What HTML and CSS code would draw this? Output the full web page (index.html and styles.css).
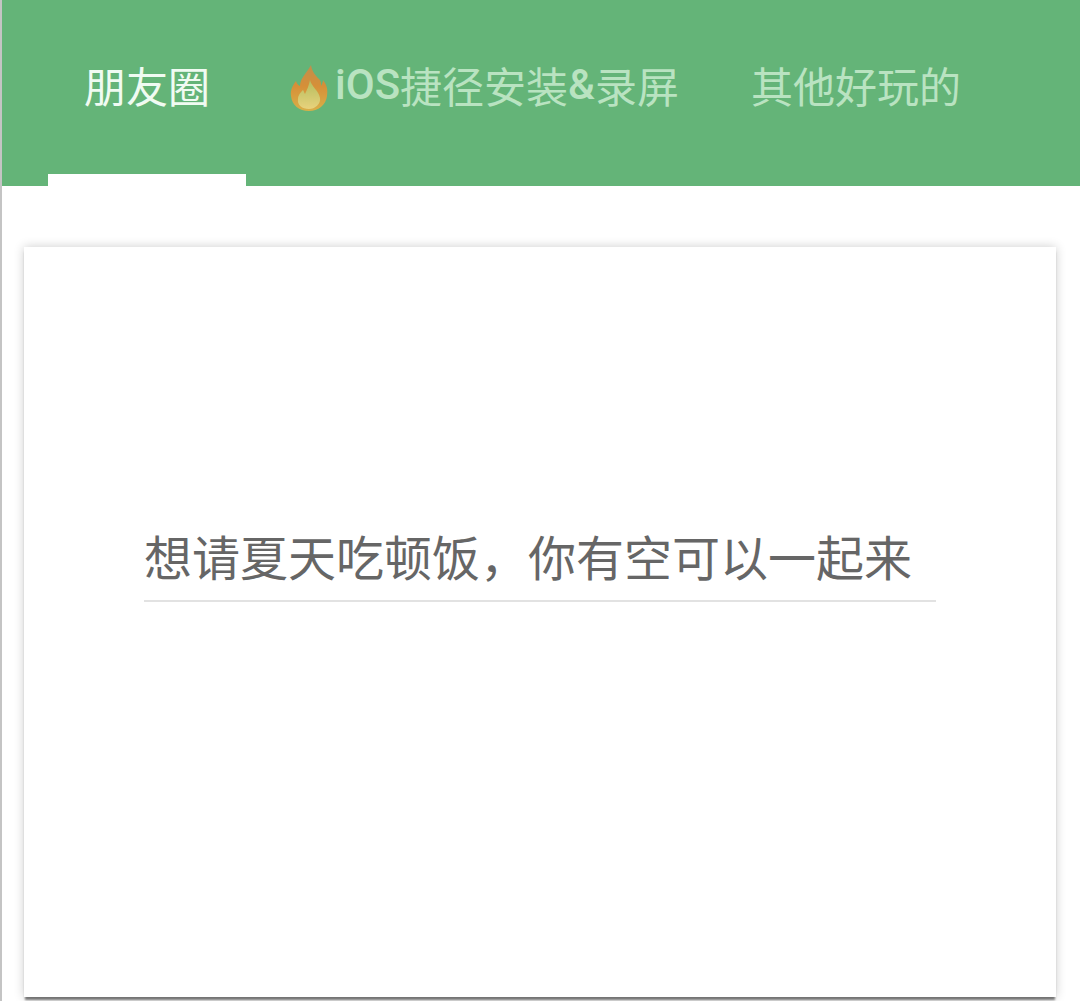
FILE: index.html
```html
<!DOCTYPE html>
<html lang="zh-CN">
<head>
    <meta charset="UTF-8">
    <meta name="viewport" content="width=device-width, initial-scale=1.0">
    <title>朋友圈</title>
    <link rel="stylesheet" href="styles.css">
</head>
<body>
    <div class="tabs">
        <div class="tab active">朋友圈</div>
        <div class="tab">
            <svg class="flame" viewBox="0 0 38 46">
                <defs>
                    <linearGradient id="outer" x1="0" y1="0" x2="0" y2="1">
                        <stop offset="0" stop-color="#c08f4c"/>
                        <stop offset="0.45" stop-color="#d68f38"/>
                        <stop offset="1" stop-color="#d8b048"/>
                    </linearGradient>
                    <linearGradient id="inner" x1="0" y1="0" x2="0" y2="1">
                        <stop offset="0" stop-color="#b3bd5e"/>
                        <stop offset="1" stop-color="#e8d27c"/>
                    </linearGradient>
                </defs>
                <path d="M21 0C22 7 26 11 30 15C31 17 31 19 31 21C32 19 33 17 33 15C37 20 38 25 37 31C36 40 28 46 19 46C9 46 2 40 1 31C0 25 3 20 6 16C7 19 8 20 10 21C10 13 17 8 21 0Z" fill="url(#outer)"/>
                <path d="M20 15C21 21 29 26 30 33C31 39 25 44 19 44C12 44 7 40 8 34C8 30 11 27 13 25C14 26 14 28 15 29C17 25 19 20 20 15Z" fill="url(#inner)"/>
            </svg><span class="latin">iOS</span>捷径安装<span class="latin">&amp;</span>录屏
        </div>
        <div class="tab">其他好玩的</div>
    </div>

    <div class="card">
        <div class="line">想请夏天吃顿饭，你有空可以一起来</div>
    </div>
</body>
</html>
```

FILE: styles.css
```css
* {
    box-sizing: border-box;
}
body {
    margin: 0;
    height: 1001px;
    overflow: hidden;
    background: #fff;
    border-left: 2px solid #c4c4c4;
    font-family: Roboto, "Noto Sans CJK SC", sans-serif;
}
.tabs {
    display: flex;
    height: 186px;
    margin-left: -2px;
    padding-left: 46px;
    background: #64b478;
    border-left: 2px solid #4f9c64;
}
.tab {
    display: flex;
    align-items: center;
    height: 186px;
    padding: 0 36px 6px;
    border-bottom: 12px solid transparent;
    font-size: 42px;
    color: #b9e3c1;
    white-space: nowrap;
}
.tab.active {
    color: #f0fbf2;
    border-bottom-color: #fff;
}
.latin {
    font-weight: 500;
}
.flame {
    width: 38px;
    height: 46px;
    margin: 8px 7px 0 8px;
    flex-shrink: 0;
    filter: blur(0.7px);
}
.card {
    height: 750px;
    margin: 61px 24px 0 22px;
    padding: 272px 120px 0;
    background: #fff;
    box-shadow: 0 4px 2px -1px rgba(0, 0, 0, 0.5), 0 0 10px rgba(0, 0, 0, 0.2);
}
.line {
    height: 83px;
    border-bottom: 2px solid #e2e2e2;
    font-size: 48px;
    line-height: 82px;
    color: #666;
    white-space: nowrap;
}
```
